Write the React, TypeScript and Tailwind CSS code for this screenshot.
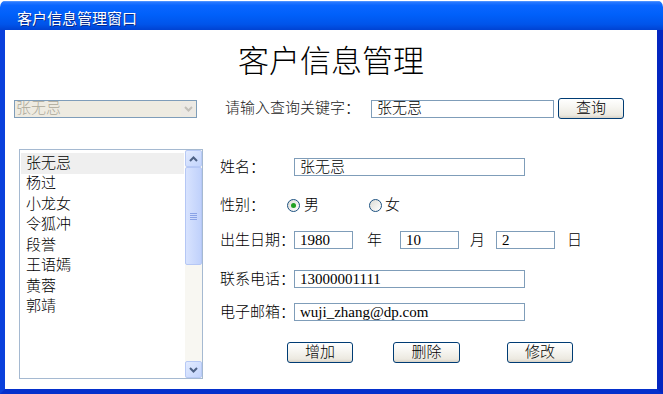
import React from "react";

const items = ["张无忌", "杨过", "小龙女", "令狐冲", "段誉", "王语嫣", "黄蓉", "郭靖"];

function Field({ w, children }: { w: string; children?: React.ReactNode }) {
  return (
    <div className={`${w} flex h-[18px] shrink-0 items-center border border-[#7f9db9] bg-white pl-[5px] text-[15px] leading-none text-black`}>
      {children}
    </div>
  );
}

function XPButton({ w, children }: { w: string; children: React.ReactNode }) {
  return (
    <div className={`${w} flex h-[21px] shrink-0 items-center justify-center rounded-[3px] border border-[#003c74] bg-[linear-gradient(to_bottom,#ffffff_0%,#f7f6f2_40%,#ece9e0_85%,#d8d2c6_100%)] text-[15px] leading-none text-black`}>
      {children}
    </div>
  );
}

function Radio({ checked }: { checked?: boolean }) {
  return (
    <div className="flex h-[13px] w-[13px] shrink-0 items-center justify-center rounded-full border border-[#1c5180] bg-[linear-gradient(135deg,#dcdcd6,#ffffff)]">
      {checked && <div className="h-[5px] w-[5px] rounded-full bg-[#21a121]" />}
    </div>
  );
}

function Chevron({ up, color }: { up?: boolean; color: string }) {
  return (
    <svg width="9" height="6" viewBox="0 0 9 6">
      <path
        d={up ? "M1 5 L4.5 1.5 L8 5" : "M1 1 L4.5 4.5 L8 1"}
        fill="none"
        stroke={color}
        strokeWidth="2"
      />
    </svg>
  );
}

function ScrollBtn({ up }: { up?: boolean }) {
  return (
    <div className="flex h-[17px] w-[17px] items-center justify-center rounded-[2px] border border-[#b7c9f5] bg-[linear-gradient(135deg,#e2ebff,#c3d4fc)]">
      <Chevron up={up} color="#4d6185" />
    </div>
  );
}

function Label({ children, w = "w-[74px]" }: { children: React.ReactNode; w?: string }) {
  return <div className={`${w} shrink-0 whitespace-nowrap`}>{children}</div>;
}

export default function App() {
  return (
    <div className="h-[394px] w-[663px] bg-white font-['Liberation_Serif','Noto_Sans_CJK_SC',serif] font-light text-[#1a1a1a]">
      <div className="flex h-full flex-col overflow-hidden rounded-t-[7px] pt-[1px]">
        <div className="flex h-[29px] shrink-0 items-center border-t border-[#4a90ff] bg-[linear-gradient(to_bottom,#2a7aff_0%,#0a66ff_12%,#0060fa_45%,#0054ea_80%,#0042d2_100%)] pl-[17px] pt-[2px]">
          <span className="font-['Noto_Sans_CJK_SC',sans-serif] text-[15px] font-normal leading-none text-white [text-shadow:1px_1px_0_#0a2a8a]">
            客户信息管理窗口
          </span>
        </div>
        <div className="flex flex-1 flex-col border-b-[5px] border-l-[5px] border-r-[6px] border-b-[#0530cc] border-l-[#0a40dc] border-r-[#0426c0] bg-white">
          <div className="mt-[16px] text-center text-[31px] leading-none text-black">客户信息管理</div>

          <div className="mt-[21px] flex h-[21px] items-center">
            <div className="ml-[9px] flex h-[18px] w-[183px] items-center border border-[#7f9db9] bg-[#eeebe1]">
              <span className="flex-1 pl-[1px] text-[15px] leading-none text-[#aca899]">张无忌</span>
              <div className="mr-[1px] flex h-[14px] w-[14px] items-center justify-center bg-[#ece9e4]">
                <Chevron color="#c2bfb8" />
              </div>
            </div>
            <div className="ml-[28px] w-[146px] shrink-0 whitespace-nowrap text-[15px] leading-none">请输入查询关键字：</div>
            <Field w="w-[183px]">张无忌</Field>
            <div className="ml-[4px]">
              <XPButton w="w-[66px]">查询</XPButton>
            </div>
          </div>

          <div className="mt-[30px] flex">
            <div className="ml-[14px] flex h-[230px] w-[184px] border border-[#a5b9d1] bg-white">
              <div className="flex-1 px-[1px] pt-[3px]">
                {items.map((n, i) => (
                  <div
                    key={n}
                    className={`flex h-[20.5px] items-center pl-[5px] text-[15px] leading-none text-black ${i === 0 ? "bg-[#efefef]" : ""}`}
                  >
                    {n}
                  </div>
                ))}
              </div>
              <div className="flex w-[17px] flex-col bg-[#f8f7f2]">
                <ScrollBtn up />
                <div className="flex h-[98px] items-center justify-center rounded-[2px] border border-[#b5c7f5] bg-[linear-gradient(to_right,#d8e3fe,#c0d1fb)]">
                  <div className="flex flex-col gap-[1px]">
                    <div className="h-[1px] w-[7px] bg-[#8aa3e6]" />
                    <div className="h-[1px] w-[7px] bg-[#8aa3e6]" />
                    <div className="h-[1px] w-[7px] bg-[#8aa3e6]" />
                    <div className="h-[1px] w-[7px] bg-[#8aa3e6]" />
                  </div>
                </div>
                <div className="flex-1" />
                <ScrollBtn />
              </div>
            </div>

            <div className="ml-[17px] mt-[9px] flex flex-col text-[15px] leading-none text-black">
              <div className="flex h-[18px] items-center">
                <Label>姓名：</Label>
                <Field w="w-[231px]">张无忌</Field>
              </div>

              <div className="mt-[20px] flex h-[18px] items-center">
                <Label w="w-[67px]">性别：</Label>
                <Radio checked />
                <span className="ml-[4px]">男</span>
                <div className="ml-[50px]">
                  <Radio />
                </div>
                <span className="ml-[3px]">女</span>
              </div>

              <div className="mt-[17px] flex h-[18px] items-center">
                <Label>出生日期：</Label>
                <Field w="w-[59px]">1980</Field>
                <span className="ml-[14px]">年</span>
                <div className="ml-[18px]">
                  <Field w="w-[59px]">10</Field>
                </div>
                <span className="ml-[11px]">月</span>
                <div className="ml-[11px]">
                  <Field w="w-[59px]">2</Field>
                </div>
                <span className="ml-[12px]">日</span>
              </div>

              <div className="mt-[21px] flex h-[18px] items-center">
                <Label>联系电话：</Label>
                <Field w="w-[231px]">13000001111</Field>
              </div>

              <div className="mt-[15px] flex h-[18px] items-center">
                <Label>电子邮箱：</Label>
                <Field w="w-[231px]">wuji_zhang@dp.com</Field>
              </div>

              <div className="mt-[21px] flex items-center pl-[67px]">
                <XPButton w="w-[66px]">增加</XPButton>
                <div className="ml-[40px]">
                  <XPButton w="w-[67px]">删除</XPButton>
                </div>
                <div className="ml-[47px]">
                  <XPButton w="w-[66px]">修改</XPButton>
                </div>
              </div>
            </div>
          </div>
        </div>
      </div>
    </div>
  );
}
